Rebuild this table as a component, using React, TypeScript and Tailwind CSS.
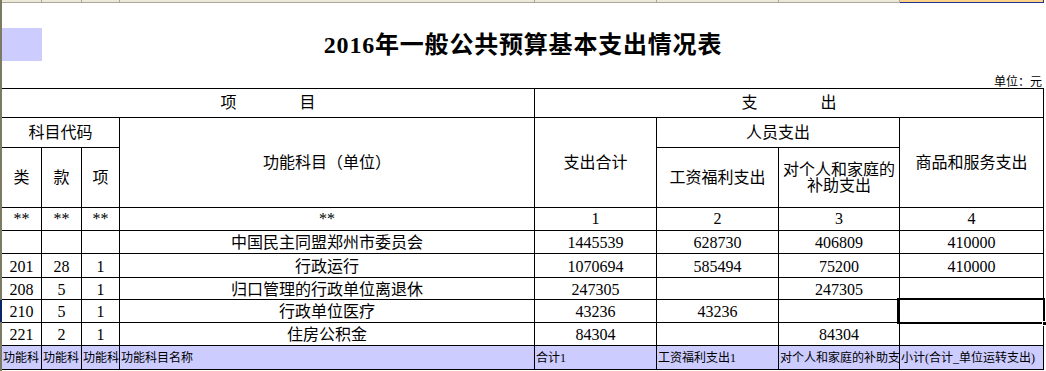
import React from "react";

const cellBase =
  "border-r border-b border-black flex items-center justify-center overflow-hidden whitespace-nowrap text-[16px] leading-[16px]";

type Row = { h: string; v: string[] };

const dataRows: Row[] = [
  { h: "h-[23px]", v: ["", "", "", "中国民主同盟郑州市委员会", "1445539", "628730", "406809", "410000"] },
  { h: "h-[24px]", v: ["201", "28", "1", "行政运行", "1070694", "585494", "75200", "410000"] },
  { h: "h-[22px]", v: ["208", "5", "1", "归口管理的行政单位离退休", "247305", "", "247305", ""] },
  { h: "h-[23px]", v: ["210", "5", "1", "行政单位医疗", "43236", "43236", "", ""] },
  { h: "h-[23px]", v: ["221", "2", "1", "住房公积金", "84304", "", "84304", ""] },
];

const footer = [
  "功能科",
  "功能科",
  "功能科",
  "功能科目名称",
  "合计1",
  "工资福利支出1",
  "对个人和家庭的补助支",
  "小计(合计_单位运转支出)",
];

const stripCols = [
  "w-[40px]",
  "w-[40px]",
  "w-[38px]",
  "w-[415px]",
  "w-[122px]",
  "w-[122px]",
  "w-[121px]",
];

export default function App() {
  return (
    <div className="w-[1046px] h-[371px] bg-white flex text-black overflow-hidden font-['Liberation_Serif','Noto_Sans_CJK_SC',serif]">
      {/* left edge of sheet */}
      <div className="w-[2px] h-full flex flex-col">
        <div className="h-[300px] bg-[#7b7b63]" />
        <div className="h-[22px] bg-[#0a246a]" />
        <div className="flex-1 bg-[#7b7b63]" />
      </div>

      <div className="w-[1042px] flex flex-col">
        {/* column header strip */}
        <div className="h-[3px] flex">
          {stripCols.map((w, i) => (
            <div key={i} className={`${w} h-full bg-[#ece9d8] border-r border-b border-[#aca899]`} />
          ))}
          <div className="w-[144px] h-full bg-[#ffd28a] border-r border-b border-[#22348f]" />
        </div>

        <div className="h-[25px]" />

        {/* title row */}
        <div className="h-[33px] grid grid-cols-[40px_1fr_40px]">
          <div className="bg-[#ccccff]" />
          <div className="flex items-center justify-center text-[24px] leading-[24px] font-bold tracking-[0.8px] whitespace-nowrap">
            2016年一般公共预算基本支出情况表
          </div>
          <div />
        </div>

        <div className="h-[27px] flex items-end justify-end pr-[2px] text-[12px] leading-[12px] whitespace-nowrap">
          单位：元
        </div>

        {/* table */}
        <div className="grid grid-cols-[40px_40px_38px_415px_122px_122px_121px_144px] grid-rows-[29px_30px_60px_23px] border-t border-black">
          <div className={`${cellBase} col-start-1 col-span-4 row-start-1 gap-[63px]`}>
            <span>项</span>
            <span>目</span>
          </div>
          <div className={`${cellBase} col-start-5 col-span-4 row-start-1 gap-[63px]`}>
            <span>支</span>
            <span>出</span>
          </div>

          <div className={`${cellBase} col-start-1 col-span-3 row-start-2`}>科目代码</div>
          <div className={`${cellBase} col-start-4 row-start-2 row-span-2`}>功能科目（单位）</div>
          <div className={`${cellBase} col-start-5 row-start-2 row-span-2`}>支出合计</div>
          <div className={`${cellBase} col-start-6 col-span-2 row-start-2`}>人员支出</div>
          <div className={`${cellBase} col-start-8 row-start-2 row-span-2`}>商品和服务支出</div>

          <div className={`${cellBase} col-start-1 row-start-3`}>类</div>
          <div className={`${cellBase} col-start-2 row-start-3`}>款</div>
          <div className={`${cellBase} col-start-3 row-start-3`}>项</div>
          <div className={`${cellBase} col-start-6 row-start-3`}>工资福利支出</div>
          <div className={`${cellBase} col-start-7 row-start-3 flex-col`}>
            <span className="leading-[16px]">对个人和家庭的</span>
            <span className="leading-[16px]">补助支出</span>
          </div>

          {["**", "**", "**", "**", "1", "2", "3", "4"].map((t, i) => (
            <div key={i} className={`${cellBase} row-start-4`}>
              {t}
            </div>
          ))}
        </div>

        {dataRows.map((r, ri) => (
          <div key={ri} className={`${r.h} grid grid-cols-[40px_40px_38px_415px_122px_122px_121px_144px]`}>
            {r.v.map((t, i) => (
              <div key={i} className={`${cellBase} pt-[2px] ${ri === 3 && i === 7 ? "relative overflow-visible" : ""}`}>
                {t}
                {ri === 3 && i === 7 ? (
                  <div className="absolute left-[-3px] top-[-2px] right-[-2px] bottom-[-2px] border-2 border-black">
                    <div className="absolute right-[-4px] bottom-[-4px] w-[5px] h-[5px] bg-black border border-white" />
                  </div>
                ) : null}
              </div>
            ))}
          </div>
        ))}

        <div className="h-[24px] grid grid-cols-[40px_40px_38px_415px_122px_122px_121px_144px] bg-[#ccccff]">
          {footer.map((t, i) => (
            <div
              key={i}
              className="border-r border-b border-black flex items-center justify-start pl-[1px] overflow-hidden whitespace-nowrap text-[12px] leading-[12px]"
            >
              {t}
            </div>
          ))}
        </div>
      </div>
      <div className="w-[2px]" />
    </div>
  );
}
